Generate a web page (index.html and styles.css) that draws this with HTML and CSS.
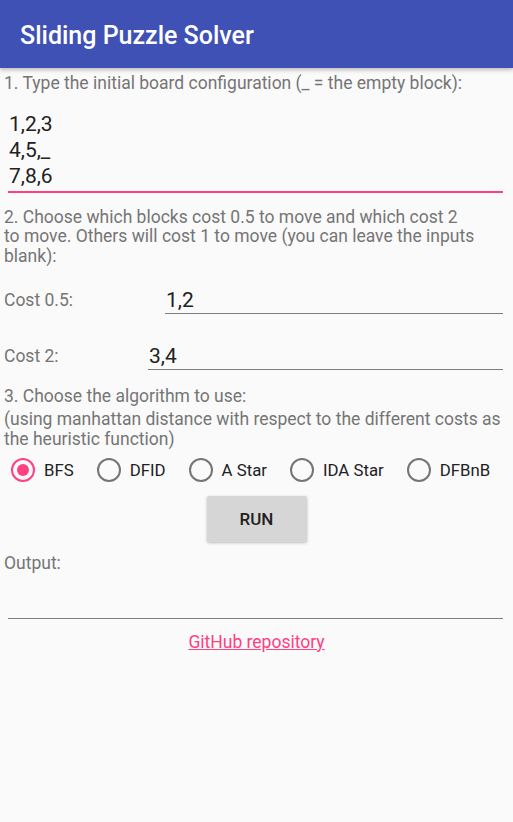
FILE: index.html
```html
<!DOCTYPE html>
<html>
<head>
<meta charset="utf-8">
<link rel="stylesheet" href="styles.css">
</head>
<body>
<header class="appbar"><h1 class="title">Sliding Puzzle Solver</h1></header>
<main class="content">
  <p class="hint step1">1. Type the initial board configuration (_ = the empty block):</p>
  <div class="board">1,2,3<br>4,5,_<br>7,8,6</div>
  <p class="hint step2">2. Choose which blocks cost 0.5 to move and which cost 2<br>to move. Others will cost 1 to move (you can leave the inputs<br>blank):</p>
  <div class="cost-row first">
    <span class="cost-label w-half">Cost 0.5:</span>
    <div class="field">1,2</div>
  </div>
  <div class="cost-row second">
    <span class="cost-label w-two">Cost 2:</span>
    <div class="field">3,4</div>
  </div>
  <p class="hint step3">3. Choose the algorithm to use:</p>
  <p class="hint step3b">(using manhattan distance with respect to the different costs as<br>the heuristic function)</p>
  <div class="radios">
    <div class="radio checked"><span class="ring"><span class="dot"></span></span><span class="rlabel">BFS</span></div>
    <div class="radio"><span class="ring"></span><span class="rlabel">DFID</span></div>
    <div class="radio"><span class="ring"></span><span class="rlabel">A Star</span></div>
    <div class="radio"><span class="ring"></span><span class="rlabel">IDA Star</span></div>
    <div class="radio"><span class="ring"></span><span class="rlabel">DFBnB</span></div>
  </div>
  <div class="btn-wrap"><button class="run">RUN</button></div>
  <p class="hint output-label">Output:</p>
  <div class="output"></div>
  <div class="link-wrap"><a class="repo" href="#">GitHub repository</a></div>
</main>
</body>
</html>
```
FILE: styles.css
```css
html, body {
  margin: 0;
  padding: 0;
  background: #fafafa;
  font-family: Roboto, "Liberation Sans", sans-serif;
}
.appbar {
  height: 68px;
  background: #3f51b5;
  display: flex;
  align-items: center;
  padding-left: 20px;
  box-shadow: 0 2px 4px rgba(0,0,0,0.25);
  position: relative;
}
.title {
  margin: 0;
  color: #fff;
  font-size: 25px;
  font-weight: 500;
  margin-top: 2px;
}
.content {
  padding: 0 10px 0 4px;
}
.hint {
  margin: 0;
  color: #757575;
  font-size: 17.5px;
  line-height: 19.5px;
}
.step1 { margin-top: 6px; }
.board {
  margin: 17px 0 0 4px;
  padding-left: 1px;
  font-size: 21px;
  line-height: 26px;
  color: #212121;
  border-bottom: 2px solid #ff4081;
  padding-bottom: 2px;
}
.step2 { margin-top: 15px; }
.cost-row {
  display: flex;
  align-items: flex-start;
}
.cost-row.first { margin-top: 21px; }
.cost-row.second { margin-top: 29px; }
.cost-label {
  color: #757575;
  font-size: 17.5px;
  line-height: 26px;
  flex: none;
}
.w-half { width: 161px; }
.w-two { width: 144px; }
.field {
  flex: 1;
  font-size: 21px;
  line-height: 26px;
  color: #212121;
  padding-left: 1px;
  border-bottom: 1.5px solid #7d7d7d;
}
.step3 { margin-top: 16px; line-height: 20px; }
.step3b { margin-top: 3px; line-height: 20px; }
.radios {
  display: flex;
  margin-top: 9px;
  padding-left: 7px;
  gap: 23px;
  align-items: center;
}
.radio {
  display: flex;
  align-items: center;
  gap: 9px;
}
.ring {
  width: 24px;
  height: 24px;
  box-sizing: border-box;
  border: 2.5px solid #757575;
  border-radius: 50%;
  display: flex;
  align-items: center;
  justify-content: center;
}
.radio.checked .ring { border-color: #ff4081; }
.dot {
  width: 12px;
  height: 12px;
  border-radius: 50%;
  background: #ff4081;
}
.rlabel {
  font-size: 16.8px;
  color: #212121;
  line-height: 24px;
}
.btn-wrap {
  display: flex;
  justify-content: center;
  margin-top: 14px;
  padding-left: 6px;
}
.run {
  width: 100px;
  height: 46px;
  border: none;
  border-radius: 2px;
  background: #d6d6d6;
  box-shadow: 0 1px 3px rgba(0,0,0,0.25);
  font-family: Roboto, "Liberation Sans", sans-serif;
  font-size: 17px;
  font-weight: 500;
  color: #212121;
  padding: 0;
}
.output-label { margin-top: 12px; line-height: 19px; }
.output {
  margin-left: 4px;
  height: 45px;
  border-bottom: 1.5px solid #7d7d7d;
}
.link-wrap {
  display: flex;
  justify-content: center;
  margin-top: 14px;
  padding-left: 6px;
}
.repo {
  color: #ff4081;
  font-size: 17.5px;
  line-height: 19px;
}
```
